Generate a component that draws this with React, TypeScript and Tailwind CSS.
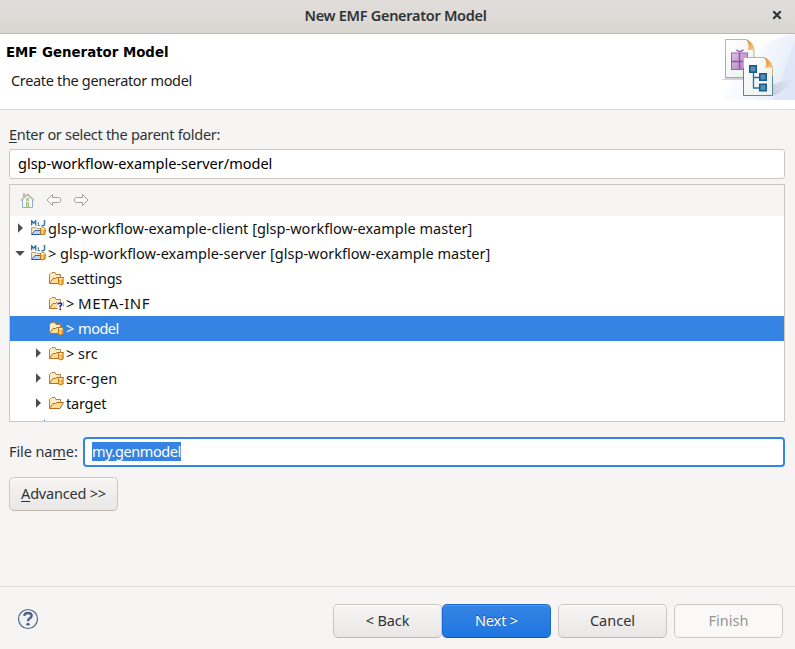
import type { ReactNode } from "react";

type Badge = "repo" | "question" | "none";

function Gift() {
  return (
    <svg className="block h-[66px] w-[76px]" viewBox="0 0 76 66">
      <defs>
        <linearGradient id="sky" x1="0" y1="0.2" x2="1" y2="0.6">
          <stop offset="0" stopColor="#ffffff" />
          <stop offset="0.5" stopColor="#f6f9fe" />
          <stop offset="1" stopColor="#e4ebf9" />
        </linearGradient>
        <linearGradient id="sheet" x1="0" y1="0" x2="1" y2="1">
          <stop offset="0" stopColor="#ffffff" />
          <stop offset="1" stopColor="#eaf0ec" />
        </linearGradient>
        <linearGradient id="fold" x1="0" y1="0" x2="1" y2="1">
          <stop offset="0" stopColor="#dd852c" />
          <stop offset="1" stopColor="#fbd08e" />
        </linearGradient>
        <linearGradient id="shade" x1="0" y1="0" x2="1" y2="0">
          <stop offset="0" stopColor="#8b8fa0" stopOpacity="0.65" />
          <stop offset="1" stopColor="#b8c0d6" stopOpacity="0" />
        </linearGradient>
        <linearGradient id="violet" x1="0" y1="0" x2="1" y2="1">
          <stop offset="0" stopColor="#dcc0e4" />
          <stop offset="1" stopColor="#b07fc2" />
        </linearGradient>
      </defs>
      <path d="M76 0Q50 4 33 20Q15 38 4 66H76Z" fill="url(#sky)" />
      <path d="M76 6Q68 30 54 66H76Z" fill="#d5dff5" opacity="0.4" />
      <path d="M54 50L76 44Q66 57 54 62Z" fill="url(#shade)" opacity="0.5" />
      <path d="M8 43.500H25V46H2Z" fill="#b5b7bd" opacity="0.6" />
      <path d="M6.500 5.500H27Q34 8 35 16V43.500H6.500Z" fill="url(#sheet)" stroke="#c4b78c" />
      <path d="M6.500 20V43.500H25" fill="none" stroke="#9db0a8" />
      <path d="M27 5.500Q34 8 35.500 17Q32 15 29 16Q31 10 27 5.500Z" fill="url(#fold)" />
      <rect x="12.500" y="19" width="16" height="16.500" fill="url(#violet)" stroke="#9d62b0" />
      <path d="M12.500 27.500H28.500M20.500 19V35" stroke="#91519f" strokeWidth="1.400" />
      <path d="M20.500 18L17.500 15.800M20.500 18L24.500 15.800" fill="none" stroke="#a35bb8" strokeWidth="1.500" />
      <path d="M24.500 23.500H45Q52 26 53.500 34V61.500H24.500Z" fill="url(#sheet)" stroke="#c8b77c" />
      <path d="M24.500 34V61.500H53.500V42" fill="none" stroke="#5d8a90" />
      <path d="M45 23.500Q52 26 54 35Q50 32 46 34Q49 28 45 23.500Z" fill="url(#fold)" />
      <path d="M34.500 38V54H42M34.500 43.500H42" fill="none" stroke="#2b6c9e" strokeWidth="1.300" />
      <g fill="#5590bb" stroke="#1b5a8c" strokeWidth="1.600">
        <rect x="30.800" y="31.800" width="6.400" height="6.400" />
        <rect x="40.800" y="39.800" width="6.400" height="6.400" />
        <rect x="40.800" y="50.300" width="6.400" height="6.400" />
      </g>
    </svg>
  );
}

function RepoBadge() {
  return (
    <g>
      <path d="M9.500 8.500Q11.800 6.700 14.100 8.500V14Q11.800 15.800 9.500 14Z" fill="#f5b13a" stroke="#c67a0f" />
      <path d="M10 9.300Q11.800 10.400 13.600 9.300V8.500Q11.800 7.600 10 8.500Z" fill="#fff3d4" />
      <path d="M11.300 10.800V14.200" stroke="#ffe9b0" />
    </g>
  );
}

function Folder({ badge }: { badge: Badge }) {
  return (
    <svg className="block h-4 w-4 shrink-0" viewBox="0 0 16 16">
      <path d="M0.500 13V4.500L1.500 3.500H2L3 2.500H6L7 4.500H11.500V7" fill="#fbecc4" stroke="#b97f3e" />
      <path d="M0.500 13.500L4 8.500H6.500L8 7.500H14.500L11 13.500Z" fill="#fbdc98" stroke="#b46f22" />
      {badge === "repo" && <RepoBadge />}
      {badge === "question" && (
        <>
          <path d="M8.500 7H14V15H8.500Z" fill="#fff" />
          <path d="M9.300 9.500V8.700Q11.200 7.200 12.700 8.600Q13 10 11.200 11V12.500" fill="none" stroke="#1d1d99" strokeWidth="1.500" />
          <path d="M10.400 13.400H12V15H10.400Z" fill="#1d1d99" />
          <path d="M14 9.500H15V11H14Z" fill="#bb7a30" />
        </>
      )}
    </svg>
  );
}

function Project() {
  return (
    <svg className="block h-4 w-4 shrink-0" viewBox="0 0 16 16">
      <path d="M0.500 14V7.500H5L6 8.500H12V11" fill="#f8e8bd" stroke="#b3a17f" />
      <path d="M0.500 14.500L4 10.500H14.500L11.500 14.500Z" fill="#b9d4fa" stroke="#3c66b5" />
      <path d="M1 14.500H9" stroke="#2f58a8" />
      <path d="M0.700 5.500V0.800L2.700 3.200L4.700 0.800V5.500" fill="none" stroke="#2f6c9f" strokeWidth="1.300" />
      <path d="M6.500 3.500L7.500 2.500V5.500M6.300 5.500H9" fill="none" stroke="#5b93bd" />
      <path d="M13.500 0V4.500Q13.300 6.300 10.500 5.500" fill="none" stroke="#357aad" strokeWidth="1.500" />
      <RepoBadge />
    </svg>
  );
}

function Twisty({ open }: { open?: boolean }) {
  return (
    <svg className="block h-[10px] w-[10px] shrink-0" viewBox="0 0 10 10">
      <path d={open ? "M0.300 3H9.700L5 8Z" : "M3 0.300L8 5L3 9.700Z"} fill="#4b4d4e" />
    </svg>
  );
}

function ToolbarIcons() {
  return (
    <div className="flex h-[31px] items-center bg-[#f6f5f4] pb-px pl-[10px]">
      <svg className="block h-4 w-4" viewBox="0 0 16 16">
        <path d="M2.500 7V15.500H12.500V7L7.500 3Z" fill="#f4f8fb" stroke="#93add0" />
        <path d="M3.500 5V1.500H4.500V4" fill="#d2b9a1" stroke="#cbb49d" />
        <path d="M1 8.500L7.500 2.500L14 8.500" fill="none" stroke="#c9b7a0" strokeWidth="1.700" />
        <path d="M6.500 15.500V10.500H8.500V15.500Z" fill="#dce9a0" stroke="#9fb67e" />
        <path d="M6.500 6.500H8.500V8.500H6.500Z" fill="#d9e99d" stroke="#a3c193" />
      </svg>
      <svg className="ml-[10px] block h-4 w-4" viewBox="0 0 16 16">
        <path d="M1 8L6.500 2.500V5.500H13.500L14.500 6.500V9.500L13.500 10.500H6.500V13.500Z" fill="#f9f9f8" stroke="#a3a3a2" />
      </svg>
      <svg className="ml-[12px] block h-4 w-4" viewBox="0 0 16 16">
        <path d="M14 8L8.500 2.500V5.500H1.500L0.500 6.500V9.500L1.500 10.500H8.500V13.500Z" fill="#f9f9f8" stroke="#a3a3a2" />
      </svg>
    </div>
  );
}

function Row({ icon, twisty, nested, selected, children }: {
  icon: ReactNode;
  twisty?: "open" | "closed";
  nested?: boolean;
  selected?: boolean;
  children: ReactNode;
}) {
  return (
    <div className={`flex h-[25px] items-center whitespace-pre pb-px ${nested ? "pl-[23px]" : "pl-[5px]"} ${selected ? "bg-[#3584e4] text-white" : "text-[#111]"}`}>
      <span className="mr-[6px] flex w-[10px]">{twisty && <Twisty open={twisty === "open"} />}</span>
      <span className="mr-[1px]">{icon}</span>
      {children}
    </div>
  );
}

const button =
  "flex h-[34px] w-[109px] shrink-0 items-center justify-center whitespace-pre rounded-[5px] border border-[#cdc7c2] border-b-[#bfb8b1] bg-linear-to-b from-[#f6f5f3] to-[#e9e8e6] pb-[2px] text-[#2e3436] shadow-[inset_0_1px_#ffffff]";

export default function App() {
  return (
    <div className="flex h-[649px] w-[795px] flex-col overflow-hidden bg-[#f6f5f4] font-['Noto_Sans',sans-serif] text-[14.500px] leading-5 text-[#2e3436]">
      <header className="relative flex h-[34px] shrink-0 items-center justify-center border-b border-[#bfb8b1] bg-linear-to-b from-[#e1dedb] to-[#dad6d2] pr-[4px] pb-[3px]">
        <span className="font-semibold tracking-[-0.300px]">New EMF Generator Model</span>
        <svg className="absolute top-[10px] right-[13px] h-[10px] w-[10px]" viewBox="0 0 10 10">
          <path d="M1.300 1.300L8.700 8.700M8.700 1.300L1.300 8.700" stroke="#2e3436" strokeWidth="2.200" />
        </svg>
      </header>

      <section className="flex h-[76px] shrink-0 justify-between border-b border-[#dcdcdb] bg-white text-black">
        <div className="pt-[9px] pl-[6px]">
          <h1 className="font-['DejaVu_Sans'] text-[13.330px] font-bold">EMF Generator Model</h1>
          <p className="mt-[7px] ml-[5px] tracking-[-0.330px] text-[#1c1c1c]">Create the generator model</p>
        </div>
        <Gift />
      </section>

      <main className="flex flex-col pt-[14px] pr-[10px] pl-[9px]">
        <label className="h-5 tracking-[-0.300px]"><u className="underline-offset-2">E</u>nter or select the parent folder:</label>
        <div className="mt-[5px] flex h-[30px] items-center rounded-[3px] border border-[#cdc7c2] bg-white pb-[2px] pl-[8px] text-black">
          <span>glsp-workflow-example-server/model</span>
        </div>
        <div className="mt-[5px] h-[238px] overflow-hidden border border-[#cdc7c2] bg-white">
          <ToolbarIcons />
          <Row twisty="closed" icon={<Project />}><span className="tracking-[0.015px]">glsp-workflow-example-client [glsp-workflow-example master]</span></Row>
          <Row twisty="open" icon={<Project />}><span className="tracking-[0.015px]">&gt; glsp-workflow-example-server [glsp-workflow-example master]</span></Row>
          <Row nested icon={<Folder badge="repo" />}><span className="tracking-[-0.220px]">.settings</span></Row>
          <Row nested icon={<Folder badge="question" />}><span>&gt; <span className="text-[15px] tracking-[0.500px]">META-INF</span></span></Row>
          <Row nested selected icon={<Folder badge="repo" />}><span>&gt; <span className="tracking-[-0.500px]">model</span></span></Row>
          <Row nested twisty="closed" icon={<Folder badge="repo" />}><span>&gt; src</span></Row>
          <Row nested twisty="closed" icon={<Folder badge="repo" />}><span className="tracking-[0.150px]">src-gen</span></Row>
          <Row nested twisty="closed" icon={<Folder badge="none" />}><span className="tracking-[-0.200px]">target</span></Row>
          <div className="mt-[4px] ml-[34px] h-px w-px bg-[#3278ac]" />
        </div>
        <div className="mt-[15px] flex h-[30px] items-center">
          <span className="w-[74px] shrink-0 whitespace-pre pb-[2px] tracking-[-0.100px]">File na<u className="underline-offset-2">m</u>e:</span>
          <div className="flex h-[30px] flex-1 items-center rounded-[4px] border-2 border-[#3584e4] bg-white pb-px pl-[7px]">
            <span className="h-[19px] bg-[#3584e4] leading-[19px] tracking-[-0.420px] text-white">my.genmodel</span>
          </div>
        </div>
        <div className="mt-[10px]">
          <button className={button}><span className="tracking-[-0.200px]"><u className="underline-offset-2">A</u>dvanced &gt;&gt;</span></button>
        </div>
      </main>

      <footer className="mt-auto flex h-[63px] shrink-0 items-start border-t border-[#dcdbda] pt-[17px] pr-[12px] pl-[17px]">
        <svg className="mt-[4px] block h-[22px] w-[22px]" viewBox="0 0 22 22">
          <circle cx="11" cy="11" r="9.500" fill="#f0f2f3" stroke="#56698a" strokeWidth="1.200" />
          <path d="M7.300 7.800Q7.500 5 11 5Q14.700 5 14.700 7.800Q14.700 9.300 12.500 10.500Q11 11.500 11 13.300" fill="none" stroke="#4d6080" strokeWidth="2.300" />
          <ellipse cx="11" cy="16.300" rx="1.800" ry="1.300" fill="#4d6080" />
        </svg>
        <div className="ml-auto flex">
          <button className={button}><span className="tracking-[-0.100px]">&lt; Back</span></button>
          <button className="flex h-[34px] w-[109px] items-center justify-center rounded-[5px] border border-[#1b6acb] border-b-[#15539e] bg-linear-to-b from-[#3584e4] to-[#1f76e1] pb-[2px] tracking-[-0.150px] text-white shadow-[inset_0_1px_#5497e8] [text-shadow:0_-1px_rgba(0,0,0,0.4)]">Next &gt;</button>
          <button className={`${button} ml-[7px]`}><span>Cancel</span></button>
          <button className="ml-[7px] flex h-[34px] w-[109px] items-center justify-center rounded-[5px] border border-[#cdc7c2] bg-[#faf9f8] pb-[2px] text-[#929595]">Finish</button>
        </div>
      </footer>
    </div>
  );
}
